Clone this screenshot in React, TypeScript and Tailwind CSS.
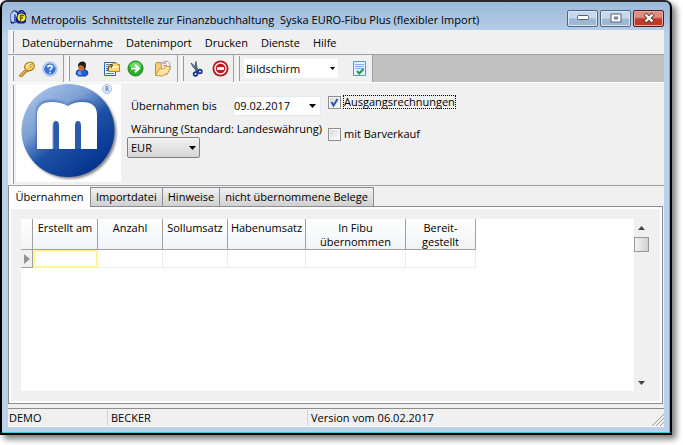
import React from 'react';

const toolButton = 'flex h-6 w-6 items-center justify-center';

function Grip() {
  return <span className="my-px w-[3px] shrink-0 self-stretch border-x border-l-white border-r-[#9a9a9a]" />;
}

function AppIcon() {
  return (
    <svg width="17" height="15" viewBox="0 0 17 15" aria-hidden="true">
      <path d="M.5 13V5L3 1.500h3L8 3l2-2h3l3 3.500V13l-2 1.500H8L6 13l-2 1.500H1z" fill="#14207c" />
      <path d="M1 11V5l3-3 3 2v3L4 13H2z" fill="#b9cdf4" />
      <path d="M4 5l2 1v8H4zM9 3l3-1 2 2H9z" fill="#3c63d8" />
      <circle cx="11.500" cy="8.500" r="4.500" fill="#ffef1a" stroke="#14207c" />
      <path d="M10.500 12V6.500h3.500M10.500 9h2.500" fill="none" stroke="#555a10" strokeWidth="1.300" />
    </svg>
  );
}

function KeyIcon() {
  return (
    <svg width="17" height="16" viewBox="0 0 17 16" aria-hidden="true">
      <path d="M8 8 1.500 14l.5 1.500 3-.500v-2h2V11h2l2-1" fill="#f2c14a" stroke="#a46c12" />
      <ellipse cx="11.500" cy="5.500" rx="5" ry="4.200" transform="rotate(-25 11.500 5.500)" fill="#f8cf5c" stroke="#a46c12" />
      <path d="M8.500 6q2-3.500 4-3.500" stroke="#fff3b0" strokeWidth="1.500" fill="none" />
      <circle cx="13" cy="4.500" r="1.200" fill="#fff" stroke="#a46c12" strokeWidth=".7" />
    </svg>
  );
}

function HelpIcon() {
  return (
    <svg width="16" height="16" viewBox="0 0 16 16" aria-hidden="true">
      <circle cx="8" cy="8" r="7" fill="#dbe7fb" stroke="#9ab3e0" />
      <circle cx="8" cy="8" r="5.800" fill="#3674d8" />
      <path d="M3 6q5-5 10 0z" fill="#76a5ee" />
      <path d="M6 6.500q0-2 2-2t2 1.700q0 1-1 1.600T8 9.500M8 10.800v1.400" fill="none" stroke="#fff" strokeWidth="1.500" />
    </svg>
  );
}

function UserIcon() {
  return (
    <svg width="14" height="16" viewBox="0 0 14 16" aria-hidden="true">
      <path d="M1 13q0-4 3.500-4.500h5q3.500.5 3.500 4.500l-2.500 2h-7z" fill="#1f5fe0" stroke="#103aa0" />
      <path d="M2.500 11.500q1-2 3-2l1 4.500h-3z" fill="#6da0ff" />
      <ellipse cx="6.500" cy="6" rx="3.200" ry="3.700" fill="#c8682f" />
      <path d="M3 6V4q1-3.500 4.500-3.500T11 4.500q0 2.500-1.500 4L8.500 5 5 4z" fill="#231815" />
    </svg>
  );
}

function ImportIcon() {
  return (
    <svg width="17" height="16" viewBox="0 0 17 16" aria-hidden="true">
      <path d="M1.500 1.500h11v13h-11z" fill="#fff" stroke="#2a62b8" />
      <path d="M3 3.500h2M3 5.500h2M3 7.500h2M3 9.500h2M3 12.500h8" stroke="#2e86d8" />
      <path d="M5.500 3.500h4l1-1.500h3l1 1.500h2v7h-11z" fill="#ffdb6b" stroke="#bd861a" />
      <path d="M6 5h10v2H6z" fill="#fff0a9" />
      <path d="M4.500 10q0-4.500 4-5.500M6.500 3.500l3 .5-1.500 3" stroke="#2a3d66" fill="none" />
    </svg>
  );
}

function GoIcon() {
  return (
    <svg width="17" height="17" viewBox="0 0 17 17" aria-hidden="true">
      <circle cx="8.500" cy="8.500" r="7.500" fill="#28b128" stroke="#16861b" />
      <path d="M2.500 7q1-5 6-5t6 5z" fill="#6ed767" />
      <path d="M4 8.500h7M8 4.800l4 3.700-4 3.700" fill="none" stroke="#fff" strokeWidth="2.200" />
    </svg>
  );
}

function FolderIcon() {
  return (
    <svg width="18" height="17" viewBox="0 0 18 17" aria-hidden="true">
      <path d="M1.500 15V4l1-1.500h4l1 2h6V14z" fill="#f6cf72" stroke="#c28a32" />
      <path d="m7 2.500 6-1.500 2.500 2 .5 7H8z" fill="#fff" stroke="#8ba7cf" />
      <path d="m8.500 4 4-1.500M9 6l4-1" stroke="#e4574b" />
      <path d="m1.500 15.500 4-7 4 .5 2-2.500h5l-2.500 6.500-6 3z" fill="#ffe6a0" stroke="#c9953f" />
    </svg>
  );
}

function ScissorsIcon() {
  return (
    <svg width="13" height="16" viewBox="0 0 13 16" aria-hidden="true">
      <path d="m1 2 2 4 5 5 1-1-3-4zM6 .5 5 6l1 5 1.500-1z" fill="#8ba0b8" stroke="#34465e" strokeWidth=".8" />
      <circle cx="5.500" cy="13" r="1.800" fill="#fff" stroke="#1a3590" strokeWidth="1.800" />
      <circle cx="10" cy="10.500" r="1.800" fill="#fff" stroke="#1a3590" strokeWidth="1.800" />
    </svg>
  );
}

function StopIcon() {
  return (
    <svg width="17" height="17" viewBox="0 0 17 17" aria-hidden="true">
      <circle cx="8.500" cy="8.500" r="8" fill="#b91218" />
      <circle cx="8.500" cy="8.500" r="5.500" fill="#c9171c" stroke="#fff" strokeWidth="1.400" />
      <path d="M5 8.500h7" stroke="#fff" strokeWidth="2.800" />
    </svg>
  );
}

function ListCheckIcon() {
  return (
    <svg width="14" height="15" viewBox="0 0 14 15" aria-hidden="true">
      <path d="M.5.500h12v14H.500z" fill="#e4f1ff" stroke="#5e93cc" />
      <path d="M2 3.500h9M2 5.500h9M2 7.500h9" stroke="#79b2ea" />
      <path d="m4 10 2.300 2.500L10.500 8" fill="none" stroke="#23a02c" strokeWidth="2" />
    </svg>
  );
}

function Logo() {
  return (
    <svg width="105" height="98" viewBox="0 0 105 98" role="img" aria-label="Metropolis">
      <defs>
        <linearGradient id="disc" x1="0.100" y1="0.050" x2="0.750" y2="0.900">
          <stop offset="0" stopColor="#aac4ea" />
          <stop offset=".36" stopColor="#7d9fd5" />
          <stop offset=".62" stopColor="#1d51a6" />
          <stop offset="1" stopColor="#07368e" />
        </linearGradient>
        <filter id="soft"><feGaussianBlur stdDeviation="1" /></filter>
      </defs>
      <path d="M0 0h105v98H0z" fill="#fff" />
      <circle cx="54" cy="48.500" r="46.500" fill="#8c8c94" filter="url(#soft)" />
      <circle cx="52" cy="46.500" r="46.500" fill="url(#disc)" />
      <path d="M20 65V29q0-13 16-13 9 0 15 5 6-5 14-5 15 0 15 13v36z" fill="#113b82" opacity=".4" filter="url(#soft)" />
      <path d="M21 65V31q0-13 15-13 9 0 16 4 6-4 14-4 15 0 15 13v34z" fill="#fff" />
      <path d="M37 65V42q0-5 3-5t3 5v23zM59 65V42q0-5 3-5t3 5v23z" fill="#2a5cae" />
      <path d="M37 65V42q0-5 3-5" fill="none" stroke="#7898cc" />
      <circle cx="91" cy="5" r="4.500" fill="#e7eefb" stroke="#a9c1e6" />
      <path d="M90 7.500v-5h1.500q1.500 1.200 0 2.500H90m1.500 0L93 7.500" stroke="#5a78ad" fill="none" />
    </svg>
  );
}

function CheckOption({ id, label, checked, focused }: { id: string; label: string; checked?: boolean; focused?: boolean }) {
  return (
    <div className="flex h-4 items-center gap-0.5">
      <span className="grid">
        <input
          id={id}
          type="checkbox"
          defaultChecked={checked}
          className="peer col-start-1 row-start-1 h-[13px] w-[13px] appearance-none border border-[#8c8e90] bg-linear-to-br from-[#d2d5d9] to-white shadow-[inset_0_0_0_1px_#f6f6f6] outline-none"
        />
        <svg className="pointer-events-none invisible col-start-1 row-start-1 peer-checked:visible" width="13" height="13" viewBox="0 0 13 13" aria-hidden="true">
          <path d="m3.500 6 2 3.500L9.500 3" fill="none" stroke="#3c529e" strokeWidth="2" />
        </svg>
      </span>
      <label htmlFor={id} className={focused ? 'border border-dotted border-black leading-3' : 'border border-transparent leading-3'}>
        {label}
      </label>
    </div>
  );
}

const captionButton =
  'flex h-[17px] w-[31px] items-center justify-center rounded-[2px] border border-[#53657f] bg-linear-to-b from-[#c5d8ec] from-45% to-[#9db8d5] to-55% shadow-[inset_0_0_0_1px_#dbe8f5]';

const headers = [
  { text: 'Erstellt am', width: 'w-[65px]' },
  { text: 'Anzahl', width: 'w-[65px]' },
  { text: 'Sollumsatz', width: 'w-[65px]' },
  { text: 'Habenumsatz', width: 'w-[78px]' },
  { text: 'In Fibu übernommen', width: 'w-[100px]' },
  { text: 'Bereit- gestellt', width: 'w-[70px]' },
];

const tabs = ['Importdatei', 'Hinweise', 'nicht übernommene Belege'];

export default function App() {
  return (
    <div className="flex h-screen bg-white pr-[11px] pb-2.5 font-['Open_Sans','Noto_Sans',sans-serif] text-[11px] leading-4 text-black">
      <div className="flex min-w-0 grow flex-col rounded-t-[7px] border-2 border-t-[#29292d] border-r-black border-b-black border-l-black bg-linear-to-b from-[#9db9d8] to-[#b9d1ea] to-8% px-1.5 pb-1.5 shadow-[4px_4px_6px_#0008,inset_-1px_-1px_0_#42c8e0]">
        <header className="flex h-7 shrink-0 items-center gap-1 pl-0.5">
          <AppIcon />
          <h1 className="grow pt-2 whitespace-pre">Metropolis  Schnittstelle zur Finanzbuchhaltung  Syska EURO-Fibu Plus (flexibler Import)</h1>
          <div className="flex gap-0.5 pt-1">
            <button aria-label="Minimieren" className={captionButton}>
              <svg width="12" height="6" viewBox="0 0 12 6"><rect x=".5" y=".5" width="11" height="4" rx="1" fill="#fff" stroke="#53606f" /></svg>
            </button>
            <button aria-label="Maximieren" className={captionButton}>
              <svg width="12" height="10" viewBox="0 0 12 10"><path d="M1 1h10v8H1zM4.500 4v2h3V4z" fillRule="evenodd" fill="#fff" stroke="#53606f" /></svg>
            </button>
            <button aria-label="Schließen" className="flex h-[17px] w-[31px] items-center justify-center rounded-[2px] border border-[#5b1a22] bg-linear-to-b from-[#dd8d7f] from-40% to-[#be3a29] to-55% shadow-[inset_0_0_0_1px_#e8a99c]">
              <svg width="12" height="10" viewBox="0 0 12 10"><path d="m2 1 8 8M10 1 2 9" stroke="#5e3434" strokeWidth="4" /><path d="m2.500 1.500 7 7M9.500 1.500l-7 7" stroke="#fff" strokeWidth="2.400" /></svg>
            </button>
          </div>
        </header>

        <div className="flex min-h-0 grow flex-col bg-[#f0f0f0]">
          <nav className="flex h-[25px] shrink-0 border-b border-[#a0a0a0] pl-[3px]">
            <Grip />
            <div className="flex items-center gap-[13px] pt-0.5 pl-2">
              {['Datenübernahme', 'Datenimport', 'Drucken', 'Dienste', 'Hilfe'].map((item) => (
                <button key={item}>{item}</button>
              ))}
            </div>
          </nav>

          <div className="flex h-[27px] shrink-0 bg-[#c0c0c0]">
            <div className="flex w-14 items-center border-r border-[#a0a0a0] bg-[#f0f0f0] pl-[3px]">
              <Grip />
              <button aria-label="Anmelden" className={toolButton}><KeyIcon /></button>
              <button aria-label="Hilfe" className={toolButton}><HelpIcon /></button>
            </div>
            <div className="flex w-[114px] items-center border-r border-[#a0a0a0] bg-[#f0f0f0] pl-[3px]">
              <Grip />
              <button aria-label="Benutzer" className={toolButton}><UserIcon /></button>
              <span className="w-[5px]" />
              <button aria-label="Import" className={toolButton}><ImportIcon /></button>
              <button aria-label="Start" className={toolButton}><GoIcon /></button>
              <span className="w-1" />
              <button aria-label="Öffnen" className={toolButton}><FolderIcon /></button>
            </div>
            <div className="flex w-[56px] items-center border-r border-[#a0a0a0] bg-[#f0f0f0] pl-[3px]">
              <Grip />
              <button aria-label="Ausschneiden" className={toolButton}><ScissorsIcon /></button>
              <button aria-label="Abbrechen" className={toolButton}><StopIcon /></button>
            </div>
            <div className="flex w-[139px] items-center gap-1 border-r border-[#a0a0a0] bg-[#f0f0f0] pl-[3px]">
              <Grip />
              <div className="grid w-24 items-center">
                <select aria-label="Ausgabe" className="col-start-1 row-start-1 h-[19px] w-full appearance-none bg-white pl-0.5 outline-none">
                  <option>Bildschirm</option>
                </select>
                <svg className="pointer-events-none col-start-1 row-start-1 mr-[3px] justify-self-end" width="5" height="3" viewBox="0 0 5 3"><path d="M0 0h5L2.500 3z" /></svg>
              </div>
              <span className="w-[3px]" />
              <button aria-label="Ausführen" className={toolButton}><ListCheckIcon /></button>
            </div>
          </div>

          <section className="flex h-[103px] shrink-0 items-start border-t border-white pt-px pl-[3px]">
            <Grip />
            <div className="ml-0.5"><Logo /></div>
            <div className="mt-3 ml-1.5 w-[201px]">
              <div className="flex h-5 items-center pl-1">
                <label htmlFor="until" className="w-[102px]">Übernahmen bis</label>
                <div className="flex h-5 w-[88px] items-center border border-[#e3e9ef] bg-white">
                  <input id="until" defaultValue="09.02.2017" className="w-[75px] outline-none" />
                  <button aria-label="Kalender öffnen">
                    <svg width="7" height="4" viewBox="0 0 7 4"><path d="M0 0h7L3.500 4z" /></svg>
                  </button>
                </div>
              </div>
              <label htmlFor="currency" className="mt-[5px] block pl-1 whitespace-nowrap">Währung (Standard: Landeswährung)</label>
              <div className="grid w-[73px] items-center">
                <select id="currency" className="col-start-1 row-start-1 h-[21px] w-full appearance-none rounded-[2px] border border-[#808080] bg-linear-to-b from-[#f2f2f2] to-[#d5d5d5] pl-[3px] outline-none">
                  <option>EUR</option>
                </select>
                <svg className="pointer-events-none col-start-1 row-start-1 mr-1 justify-self-end" width="7" height="4" viewBox="0 0 7 4"><path d="M0 0h7L3.500 4z" /></svg>
              </div>
            </div>
            <div className="mt-2.5 flex flex-col gap-4">
              <CheckOption id="invoices" label="Ausgangsrechnungen" checked focused />
              <CheckOption id="cash" label="mit Barverkauf" />
            </div>
          </section>

          <div role="tablist" className="flex h-[22px] shrink-0 items-end border-t border-[#a0a0a0]">
            <button role="tab" aria-selected="true" className="h-full w-[82px] border-l border-[#898c95] bg-white">Übernahmen</button>
            {tabs.map((tab) => (
              <button key={tab} role="tab" aria-selected="false" className="h-5 border border-l-0 border-[#898c95] bg-linear-to-b from-[#f2f2f2] to-[#d0d0d0] px-[5px] nth-2:border-l">{tab}</button>
            ))}
            <span className="mr-px h-px grow bg-[#898c95]" />
          </div>

          <main className="mr-px flex min-h-0 grow border border-t-0 border-[#898c95] bg-white p-0.5">
            <div className="flex min-w-0 grow bg-[#f0f0f0] py-2.5 pr-[11px] pl-2.5">
              <div className="min-w-0 grow overflow-hidden bg-white">
                <table className="w-[455px] table-fixed border-separate border-spacing-0">
                  <thead>
                    <tr className="h-[31px] bg-linear-to-b from-white to-[#f0f2f4] align-top">
                      <th aria-label="Auswahl" className="w-3 border-r border-b border-[#a0a0a0] p-0" />
                      {headers.map((h) => (
                        <th key={h.text} scope="col" className={`${h.width} border-r border-b border-[#a0a0a0] px-0 pt-0.5 pb-0 text-[11px] leading-[14px] font-normal`}>{h.text}</th>
                      ))}
                    </tr>
                  </thead>
                  <tbody>
                    <tr className="h-[18px]">
                      <td className="border-r border-b border-[#a0a0a0] bg-[#f0f0f0] p-0">
                        <svg className="mx-auto block" width="6" height="10" viewBox="0 0 6 10"><path d="m0 0 6 5-6 5z" fill="#959595" /></svg>
                      </td>
                      <td className="p-0"><div className="h-[18px] border-2 border-[#fdf694]" /></td>
                      {headers.slice(1).map((h) => <td key={h.text} className="border-r border-b border-[#ececec] p-0" />)}
                    </tr>
                  </tbody>
                </table>
              </div>
              <div className="flex w-[15px] flex-col items-center">
                <button aria-label="Nach oben" className="flex h-[18px] items-center"><svg width="7" height="4" viewBox="0 0 7 4"><path d="M0 4h7L3.500 0z" fill="#444" /></svg></button>
                <div className="h-[15px] w-[15px] border border-[#979797] bg-linear-to-r from-[#f4f4f4] to-[#cfcfcf]" />
                <span className="grow" />
                <button aria-label="Nach unten" className="flex h-[17px] items-center"><svg width="7" height="4" viewBox="0 0 7 4"><path d="M0 0h7L3.500 4z" fill="#444" /></svg></button>
              </div>
            </div>
          </main>

          <footer className="mt-1 flex h-[19px] shrink-0 items-center border-t border-b border-t-[#8c8c8c] border-b-white">
            <span className="w-[100px] border-r border-[#d2d2d2] pl-px">DEMO</span>
            <span className="w-[200px] border-r border-[#d2d2d2] pl-[3px]">BECKER</span>
            <span className="grow pl-[3px]">Version vom 06.02.2017</span>
            <svg className="self-end" width="12" height="12" viewBox="0 0 12 12"><path d="M0 12 12 0M4 12l8-8M8 12l4-4" stroke="#9a9a9a" /></svg>
          </footer>
        </div>
      </div>
    </div>
  );
}
